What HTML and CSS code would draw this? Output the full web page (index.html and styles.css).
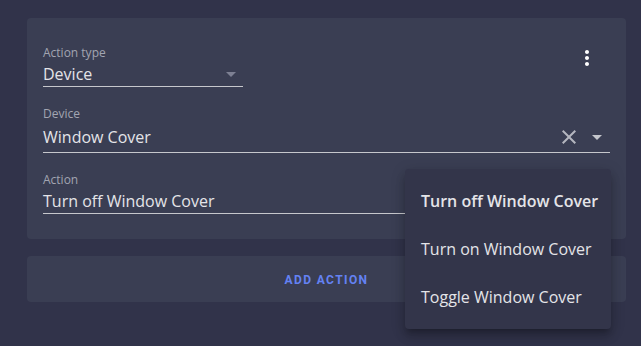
FILE: index.html
```html
<!DOCTYPE html>
<html lang="en">
<head>
<meta charset="utf-8" />
<meta name="viewport" content="width=device-width, initial-scale=1" />
<link rel="stylesheet" href="styles.css">
</head>
<body>
<div class="page">
  <div class="card">
    <div class="card-head">
      <div class="field field-short">
        <div class="field-label">Action type</div>
        <div class="field-row">
          <span class="field-value">Device</span>
          <svg class="icon icon-dim" viewBox="0 0 24 24"><path d="M7 10l5 5 5-5z"/></svg>
        </div>
      </div>
      <button class="icon-button" aria-label="More">
        <svg class="icon" viewBox="0 0 24 24"><path d="M12 8c1.1 0 2-.9 2-2s-.9-2-2-2-2 .9-2 2 .9 2 2 2zm0 2c-1.1 0-2 .9-2 2s.9 2 2 2 2-.9 2-2-.9-2-2-2zm0 6c-1.1 0-2 .9-2 2s.9 2 2 2 2-.9 2-2-.9-2-2-2z"/></svg>
      </button>
    </div>
    <div class="field field-icons">
      <div class="field-label">Device</div>
      <div class="field-row">
        <span class="field-value">Window Cover</span>
        <svg class="icon icon-clear" viewBox="0 0 24 24"><path d="M19 6.41L17.59 5 12 10.59 6.41 5 5 6.41 10.59 12 5 17.59 6.41 19 12 13.41 17.59 19 19 17.59 13.41 12z"/></svg>
        <svg class="icon icon-arrow" viewBox="0 0 24 24"><path d="M7 10l5 5 5-5z"/></svg>
      </div>
    </div>
    <div class="field">
      <div class="field-label">Action</div>
      <div class="field-row">
        <span class="field-value">Turn off Window Cover</span>
      </div>
    </div>
  </div>
  <div class="card card-add">
    <button class="text-button">Add action</button>
  </div>
</div>
<ul class="menu">
  <li class="menu-item selected">Turn off Window Cover</li>
  <li class="menu-item">Turn on Window Cover</li>
  <li class="menu-item">Toggle Window Cover</li>
</ul>
</body>
</html>
```

FILE: styles.css
```css
html {font-family: 'Open Sans', sans-serif;}
body {margin: 0; background: #31334a; color: #e4e4e8; height: 346px; overflow: hidden;}

.page {padding: 18px 15px 0 27px;}

.card {background: #3a3e53; border-radius: 4px; padding: 16px 16px 25px;}
.card-add {margin-top: 17px; padding: 5px 0; display: flex; justify-content: center;}

.card-head {display: flex; justify-content: space-between; align-items: flex-start;}
.card-head .field {margin-top: 11px;}

.icon-button {width: 48px; height: 48px; margin-right: -1px; padding: 12px; border: 0; background: none; color: #fff;}
.icon {display: block; width: 24px; height: 24px; fill: currentColor; flex: none;}
.icon-dim {color: #7d8093;}
.icon-clear {color: #b4b6bf; margin-right: 4px;}
.icon-arrow {color: #c4c6cc; margin-right: 1px;}

.field {border-bottom: 1px solid #c6c7cc; margin-top: 19px;}
.field-short {width: 200px;}
.field-label {font-size: 12px; line-height: 16px; color: #a2a5b1;}
.field-row {display: flex; align-items: center; height: 24px; margin-top: 1px;}
.field-value {flex: 1; font-size: 16px; line-height: 24px; white-space: nowrap;}
.field-icons .field-row {margin-top: 3px; margin-bottom: 3px;}

.text-button {height: 36px; padding: 2px 8px 0; border: 0; background: none; color: #6482f3;
  font-family: Roboto, sans-serif; font-weight: 700; font-size: 12px; letter-spacing: 1.4px; text-transform: uppercase;}

.menu {position: absolute; left: 405px; top: 169px; width: 206px; margin: 0; padding: 8px 0; list-style: none;
  background: #33354a; border-radius: 4px;
  box-shadow: 0 5px 5px -3px rgba(0,0,0,.2), 0 8px 10px 1px rgba(0,0,0,.14), 0 3px 14px 2px rgba(0,0,0,.12);}
.menu-item {height: 48px; padding: 0 16px; display: flex; align-items: center; font-size: 16px; white-space: nowrap;}
.menu-item.selected {font-weight: 600;}
```
